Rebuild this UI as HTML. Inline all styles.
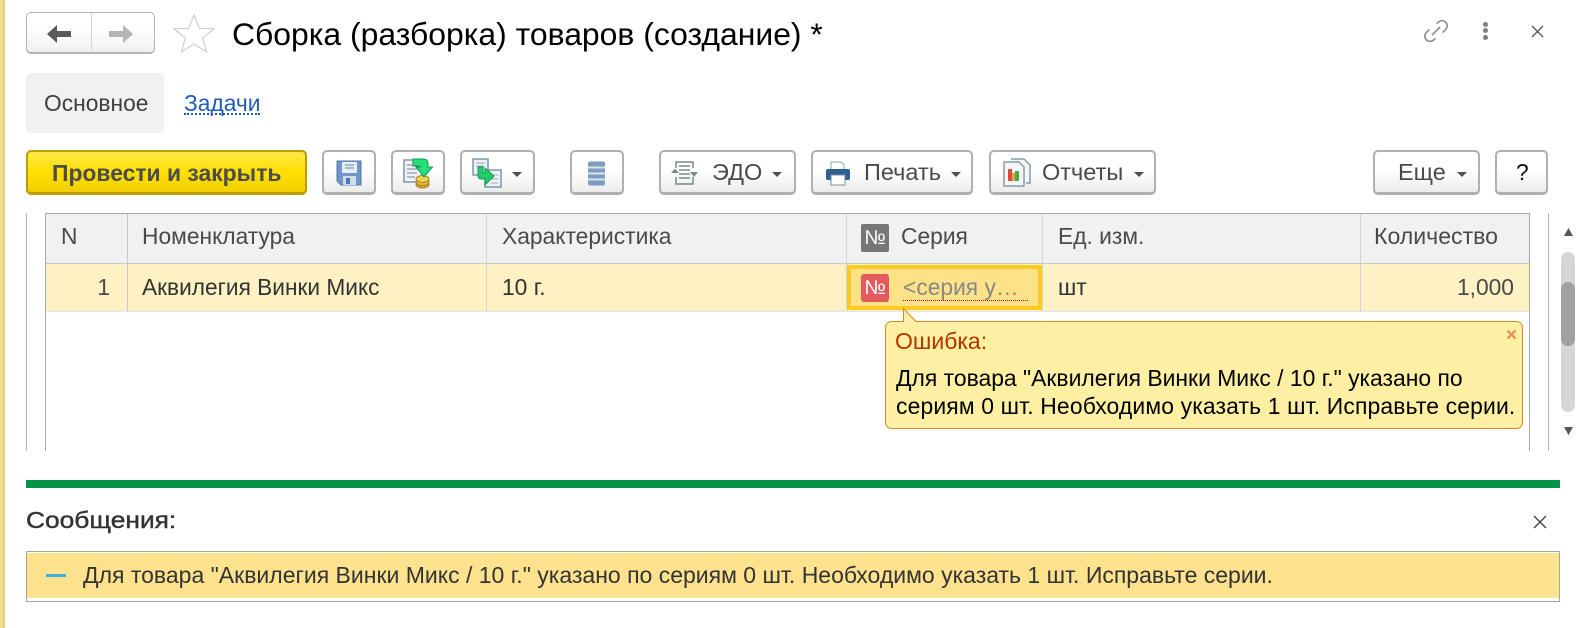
<!DOCTYPE html>
<html lang="ru"><head><meta charset="utf-8"><title>Сборка</title>
<style>
html,body{margin:0;padding:0;background:#fff}
#p{position:relative;width:1583px;height:628px;overflow:hidden;background:#fff;font-family:"Liberation Sans",sans-serif;color:#4a4a4a}
#p div,#p svg,#p span.a{position:absolute}
.t{white-space:nowrap;font-size:22.8px;line-height:26px}
.b{box-sizing:border-box;height:45px;top:150px;border:2px solid #b0b0b0;border-bottom-width:3px;border-radius:5px;background:linear-gradient(#fff 45%,#ececec)}
.c{top:177px;width:0;height:0;border:5px solid transparent;border-top:5px solid #505050;border-bottom:0}
.v{background:#d4d4d4;width:1px}
.bb{background:#c8c8c8;height:1px}
</style></head><body><div id="p">
<div style="left:0;top:0;width:5px;height:628px;background:#efdc8c;border-right:0"></div>
<div style="left:3px;top:0;width:2px;height:628px;background:#e4cf74"></div>

<div style="left:26px;top:12px;width:129px;height:42px;box-sizing:border-box;border:1px solid #b4b4b4;border-bottom-width:2px;border-radius:5px;background:linear-gradient(#fff 40%,#f0f0f0)"></div>
<div style="left:91px;top:13px;width:1px;height:40px;background:#d4d4d4"></div>
<svg style="left:46px;top:24px" width="26" height="20" viewBox="0 0 26 20"><path d="M1 10 11 1V7H25V13H11V19Z" fill="#595959"/></svg>
<svg style="left:108px;top:24px" width="26" height="20" viewBox="0 0 26 20"><path d="M25 10 15 1V7H1V13H15V19Z" fill="#b4b4b4"/></svg>
<svg style="left:172px;top:13px" width="44" height="41" viewBox="0 0 44 41"><path d="M22 2 27.5 15.500 42 15.800 30.700 25 34.700 39 22 31 9.300 39 13.300 25 2 15.800 16.500 15.500Z" fill="#fff" stroke="#c4c8cc" stroke-width="1"/></svg>
<div class="t" style="left:232px;top:16px;font-size:31.9px;line-height:36px;color:#000">Сборка (разборка) товаров (создание) *</div>

<svg style="left:1423px;top:18px" width="26" height="26" viewBox="0 0 25 25" fill="none" stroke="#8a8a8a" stroke-width="1.500"><path d="M13 5.500 15 3.700A5 5 0 0 1 22 10.800L19 14M12 19.500 10 21.300A5 5 0 0 1 3 14.200L6 11M8.500 16.500 16.500 8.500"/></svg>
<div style="left:1483px;top:22px;width:5px;height:5px;border-radius:50%;background:#808080"></div>
<div style="left:1483px;top:28px;width:5px;height:5px;border-radius:50%;background:#808080"></div>
<div style="left:1483px;top:35px;width:5px;height:5px;border-radius:50%;background:#808080"></div>
<svg style="left:1531px;top:25px" width="13" height="13" viewBox="0 0 13 13"><path d="M1 1 12 12M12 1 1 12" stroke="#555" stroke-width="1.300"/></svg>

<div style="left:26px;top:73px;width:138px;height:60px;background:#f1f1f1;border-radius:5px"></div>
<div class="t" style="left:44px;top:90px;color:#3f3f3f">Основное</div>
<div class="t" style="left:184px;top:90px;color:#1f5cb8">Задачи</div>
<div style="left:184px;top:113px;width:76px;height:0;border-top:2px dotted #1f5cb8"></div>

<div style="left:26px;top:150px;width:281px;height:45px;box-sizing:border-box;border:2px solid #b9a000;border-bottom-width:3px;border-radius:5px;background:linear-gradient(#ffe84a,#ffe000 50%,#f0d000)"></div>
<div class="t" style="left:52px;top:160px;font-weight:bold;color:#4c4c4c;font-size:22.9px">Провести и закрыть</div>

<div class="b" style="left:322px;width:54px"></div>
<svg style="left:336px;top:160px" width="26" height="26" viewBox="0 0 26 26"><path d="M1 1H25V25H5L1 21Z" fill="#6f96c8" stroke="#4c78ae"/><rect x="6" y="2" width="15" height="11" fill="#e8eef6"/><path d="M9 5H18M9 8H18" stroke="#8aa5c8" stroke-width="1.500"/><rect x="7" y="16" width="13" height="9" fill="#cfdcec"/><rect x="10" y="18" width="4" height="6" fill="#4c78ae"/></svg>

<div class="b" style="left:391px;width:54px"></div>
<svg style="left:403px;top:157px" width="32" height="32" viewBox="0 0 32 32"><rect x="1" y="3" width="18" height="22" fill="#eef2f6" stroke="#7f95ad" stroke-width="1.500"/><path d="M4 8H16M4 12H16M4 16H14M4 20H12" stroke="#9aa9ba" stroke-width="1.500"/><ellipse cx="19.500" cy="27.500" rx="6.500" ry="3.500" fill="#d9a92a" stroke="#a8801a"/><ellipse cx="19.500" cy="25" rx="6.500" ry="3.500" fill="#e8c040" stroke="#a8801a"/><ellipse cx="19.500" cy="22" rx="6.500" ry="3.500" fill="#f0d050" stroke="#a8801a"/><path d="M10 2H20Q25 2 25 7V10H29.500L21 20 13 10H17V9H10Z" fill="#22e07a" stroke="#129a50"/></svg>

<div class="b" style="left:460px;width:75px"></div>
<svg style="left:472px;top:158px" width="30" height="30" viewBox="0 0 30 30"><rect x="1" y="1" width="15" height="16" fill="#eef2f6" stroke="#7f95ad" stroke-width="1.500"/><rect x="13" y="12" width="16" height="17" fill="#eef2f6" stroke="#7f95ad" stroke-width="1.500"/><path d="M4 5H13M4 8H12M19 17H26M19 21H26M19 25H26" stroke="#9aa9ba"/><path d="M6 9H11V15H13V10L22 18 13 27V21H9Q6 21 6 17Z" fill="#22cc6e" stroke="#129a50"/></svg>
<div class="c" style="left:512px;top:172px"></div>

<div class="b" style="left:570px;width:54px"></div>
<svg style="left:587px;top:161px" width="20" height="25" viewBox="0 0 20 25"><rect x="1" y="0.500" width="17" height="24" rx="2" fill="#7c9dbd"/><path d="M1 6.500H18M1 12.500H18M1 18.500H18" stroke="#d8e2ec" stroke-width="2"/></svg>

<div class="b" style="left:659px;width:137px"></div>
<svg style="left:671px;top:159px" width="28" height="28" viewBox="0 0 28 28" fill="none" stroke="#7a8a8a" stroke-width="1.500"><path d="M5 9V3H22V9M5 18V25H22V18"/><path d="M8 7H19M8 11H19M8 15H19M8 19H19" stroke-width="1.600"/><path d="M0 14 4 9.500 8 14Z M19 13 23 18 27 13Z" fill="#7a8a8a" stroke="none"/></svg>
<div class="t" style="left:712px;top:159px;font-size:23.5px">ЭДО</div>
<div class="c" style="left:772px;top:172px"></div>

<div class="b" style="left:811px;width:162px"></div>
<svg style="left:825px;top:160px" width="26" height="26" viewBox="0 0 26 26"><path d="M6 2H16L19 5V10H6Z" fill="#fff" stroke="#8aa"/><rect x="1" y="9" width="24" height="11" rx="2" fill="#2f5f8f"/><rect x="6" y="15" width="14" height="10" fill="#fff" stroke="#7a8a9a"/></svg>
<div class="t" style="left:864px;top:159px;font-size:23.5px">Печать</div>
<div class="c" style="left:951px;top:172px"></div>

<div class="b" style="left:989px;width:167px"></div>
<svg style="left:1002px;top:158px" width="30" height="30" viewBox="0 0 30 30"><path d="M9 1H22L28 7V25H24" fill="#f4f6f8" stroke="#8a9aa6" stroke-width="1.500"/><path d="M2 4H17L22 9V28H2Z" fill="#f4f6f8" stroke="#8a9aa6" stroke-width="1.500"/><rect x="6" y="11" width="4" height="12" fill="#e04a3a"/><rect x="10" y="15" width="3" height="8" fill="#e8a040"/><rect x="13" y="13" width="4" height="10" fill="#4aaa4a"/></svg>
<div class="t" style="left:1042px;top:159px;font-size:23.5px">Отчеты</div>
<div class="c" style="left:1134px;top:172px"></div>

<div class="b" style="left:1373px;width:107px"></div>
<div class="t" style="left:1398px;top:159px;font-size:23.5px">Еще</div>
<div class="c" style="left:1457px;top:172px"></div>
<div class="b" style="left:1495px;width:53px"></div>
<div class="t" style="left:1516px;top:159px;color:#111">?</div>

<!-- table -->
<div style="left:26px;top:213px;width:1px;height:238px;background:#b4b4b4"></div>
<div style="left:1548px;top:213px;width:1px;height:238px;background:#b4b4b4"></div>
<div style="left:45px;top:213px;width:1px;height:238px;background:#a8a8a8"></div>
<div style="left:1529px;top:213px;width:1px;height:238px;background:#a8a8a8"></div>
<div style="left:45px;top:213px;width:1485px;height:1px;background:#a8a8a8"></div>
<div style="left:46px;top:214px;width:1483px;height:49px;background:#f1f1f1"></div>
<div class="bb" style="left:46px;top:263px;width:1483px"></div>
<div style="left:46px;top:264px;width:1483px;height:47px;background:#fef1c4"></div>
<div class="bb" style="left:46px;top:311px;width:1483px;background:#e4e4e4"></div>
<div class="v" style="left:127px;top:214px;height:97px;background:#c8c8c8"></div>
<div class="v" style="left:486px;top:214px;height:97px"></div>
<div class="v" style="left:846px;top:214px;height:97px"></div>
<div class="v" style="left:1042px;top:214px;height:97px"></div>
<div class="v" style="left:1360px;top:214px;height:97px"></div>

<div class="t" style="left:61px;top:223px">N</div>
<div class="t" style="left:142px;top:223px">Номенклатура</div>
<div class="t" style="left:502px;top:223px">Характеристика</div>
<div style="left:861px;top:224px;width:28px;height:28px;border-radius:2px;background:#777"></div>
<div class="t" style="left:861px;top:225px;width:28px;text-align:center;color:#fff;font-size:20px">№</div>
<div class="t" style="left:901px;top:223px">Серия</div>
<div class="t" style="left:1058px;top:223px">Ед. изм.</div>
<div class="t" style="left:1374px;top:223px;font-size:23.1px">Количество</div>

<div class="t" style="left:60px;top:274px;width:50px;text-align:right">1</div>
<div class="t" style="left:142px;top:274px;color:#333;font-size:22.7px">Аквилегия Винки Микс</div>
<div class="t" style="left:502px;top:274px;color:#333">10 г.</div>
<div class="t" style="left:1058px;top:274px;color:#333">шт</div>
<div class="t" style="left:1400px;top:274px;width:114px;text-align:right">1,000</div>

<div style="left:847px;top:265px;width:195px;height:45px;box-sizing:border-box;border:4px solid #fdcb22;background:#fee288"></div>
<div style="left:861px;top:274px;width:28px;height:28px;border-radius:3px;background:#e45a5e"></div>
<div class="t" style="left:861px;top:275px;width:28px;text-align:center;color:#fff;font-size:20px">№</div>
<div class="t" style="left:903px;top:274px;color:#888">&lt;серия у…</div>
<div style="left:903px;top:300px;width:125px;height:0;border-top:1px dotted #c00000"></div>

<svg style="left:880px;top:305px" width="650" height="130" viewBox="0 0 650 130"><path d="M12 16.500H23.500V3.500L36 16.500H636.500a6 6 0 0 1 6 6V117.500a6 6 0 0 1-6 6H11.500a6 6 0 0 1-6-6V22.500a6 6 0 0 1 6-6Z" fill="#fdf0a2" stroke="#d08c22" stroke-width="1"/></svg>
<div class="t" style="left:895px;top:328px;color:#b23400;font-size:23px">Ошибка:</div>
<div class="t" style="left:896px;top:364px;color:#000;line-height:28px;font-size:22.9px">Для товара "Аквилегия Винки Микс / 10 г." указано по<br><span style="letter-spacing:.15px">сериям 0 шт. Необходимо указать 1 шт. Исправьте серии.</span></div>
<svg style="left:1506px;top:329px" width="11" height="11" viewBox="0 0 11 11"><path d="M1.500 1.500 9.500 9.500M9.500 1.500 1.500 9.500" stroke="#e09050" stroke-width="2.200"/></svg>

<!-- scrollbar -->
<svg style="left:1563px;top:227px" width="11" height="10" viewBox="0 0 11 10"><path d="M5.500 1 10 9H1Z" fill="#555"/></svg>
<svg style="left:1563px;top:426px" width="11" height="10" viewBox="0 0 11 10"><path d="M5.500 9 10 1H1Z" fill="#555"/></svg>
<div style="left:1561px;top:252px;width:14px;height:160px;border-radius:7px;background:#d6d6d6"></div>
<div style="left:1561px;top:282px;width:14px;height:64px;border-radius:7px;background:#a0a0a0"></div>

<!-- messages -->
<div style="left:26px;top:480px;width:1534px;height:8px;background:#009646"></div>
<div class="t" style="left:26px;top:507px;color:#333;-webkit-text-stroke:.4px #333;font-size:23px;transform:scaleX(1.145);transform-origin:0 0">Сообщения:</div>
<svg style="left:1533px;top:515px" width="14" height="14" viewBox="0 0 14 14"><path d="M1 1 13 13M13 1 1 13" stroke="#444" stroke-width="1.400"/></svg>
<div style="left:26px;top:551px;width:1534px;height:51px;box-sizing:border-box;border:1px solid #a4a4a4;border-width:1px;background:#fff"></div>
<div style="left:27px;top:553px;width:1532px;height:45px;background:#fee28e"></div>
<div style="left:46px;top:574px;width:20px;height:3px;background:#3fb0dc"></div>
<div class="t" style="left:83px;top:562px;color:#333;font-size:23px">Для товара "Аквилегия Винки Микс / 10 г." указано по сериям 0 шт. Необходимо указать 1 шт. Исправьте серии.</div>
</div></body></html>
